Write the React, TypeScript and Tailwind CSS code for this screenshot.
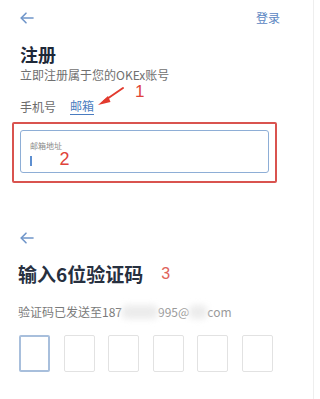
import React from "react";

const font = { fontFamily: '"Noto Sans CJK SC", "Noto Sans", sans-serif' };

function BackArrow() {
  return (
    <svg width="14" height="12" viewBox="0 0 14 12" fill="none" stroke="#6f95c9" strokeWidth="1.6" strokeLinecap="round" strokeLinejoin="round">
      <path d="M13 6H1.5" />
      <path d="M6 1.2L1.2 6L6 10.8" />
    </svg>
  );
}

export default function App() {
  return (
    <div className="relative w-[320px] h-[399px] bg-white overflow-hidden" style={font}>
      <div className="absolute right-[6px] top-0 bottom-0 w-px bg-[#eeeeee]" />
      <div className="flex flex-col px-[20px]">
        <div className="flex items-center justify-between h-[34px] pt-[2px]">
          <BackArrow />
          <span className="text-[12px] text-[#5b86c2] mr-[20px]">登录</span>
        </div>
        <div className="mt-[9px] text-[18px] leading-[22px] font-bold text-[#1e2838]">注册</div>
        <div className="mt-[3px] text-[12px] leading-[14px] text-[#707070]">立即注册属于您的OKEx账号</div>
        <div className="relative mt-[16px] flex items-end gap-[14px] text-[12px] leading-[16px]">
          <span className="text-[#6b6b6b]">手机号</span>
          <span className="text-[#4a7cc0] border-b-[1.5px] border-[#4a7cc0] pb-[0px]">邮箱</span>
          <svg className="absolute left-[76px] top-[-12px]" width="30" height="22" viewBox="0 0 30 22">
            <path d="M27 2 L8 15" stroke="#e23a2e" strokeWidth="2" strokeLinecap="round" />
            <path d="M2 19 L12 10 L14.5 16 Z" fill="#e23a2e" />
          </svg>
          <span className="absolute left-[115px] top-[-13px] text-[17px] leading-[13px] text-[#e0433a]" style={{ fontFamily: '"Liberation Sans", sans-serif' }}>1</span>
        </div>
        <div className="mt-[7px] -mx-[8px] w-[265px] h-[61px] border-[2px] border-[#d9534f] rounded-[2px] px-[6px] pt-[6px]">
          <div className="h-[43px] border-[1.5px] border-[#8eaed6] rounded-[3px] pl-[9px] pt-[10px]">
            <div className="text-[8px] leading-[10px] text-[#8a8a8a]">邮箱地址</div>
            <div className="flex items-end h-[17px]">
              <div className="w-[1.5px] h-[10px] bg-[#5d8fd0] mb-[2px]" />
              <span className="ml-[28px] text-[18px] leading-[18px] text-[#e0433a]" style={{ fontFamily: '"Liberation Sans", sans-serif' }}>2</span>
            </div>
          </div>
        </div>
        <div className="mt-[49px]">
          <BackArrow />
        </div>
        <div className="mt-[19px] flex items-center -ml-[2px]">
          <span className="text-[19px] leading-[22px] font-bold text-[#27303f]">输入6位验证码</span>
          <span className="ml-[18px] text-[16px] leading-[20px] text-[#e0625a]" style={{ fontFamily: '"Liberation Sans", sans-serif' }}>3</span>
        </div>
        <div className="mt-[19px] flex items-center text-[12px] leading-[16px] text-[#7a7a7a] -ml-[2px]">
          <span>验证码已发送至187</span>
          <span className="w-[36px] h-[14px] bg-[#ececec] rounded-[5px] blur-[3px]" />
          <span className="text-[#9a9a9a]">995@</span>
          <span className="w-[18px] h-[14px] bg-[#ececec] rounded-[5px] blur-[3px]" />
          <span className="text-[#9a9a9a]">com</span>
        </div>
        <div className="mt-[15px] flex gap-[13.6px] -ml-[1px]">
          <div className="w-[31px] h-[37px] border-[2px] border-[#a8bfdc] rounded-[2px]" />
          <div className="w-[31px] h-[37px] border border-[#e2e2e2] rounded-[2px]" />
          <div className="w-[31px] h-[37px] border border-[#e2e2e2] rounded-[2px]" />
          <div className="w-[31px] h-[37px] border border-[#e2e2e2] rounded-[2px]" />
          <div className="w-[31px] h-[37px] border border-[#e2e2e2] rounded-[2px]" />
          <div className="w-[31px] h-[37px] border border-[#e2e2e2] rounded-[2px]" />
        </div>
      </div>
    </div>
  );
}
